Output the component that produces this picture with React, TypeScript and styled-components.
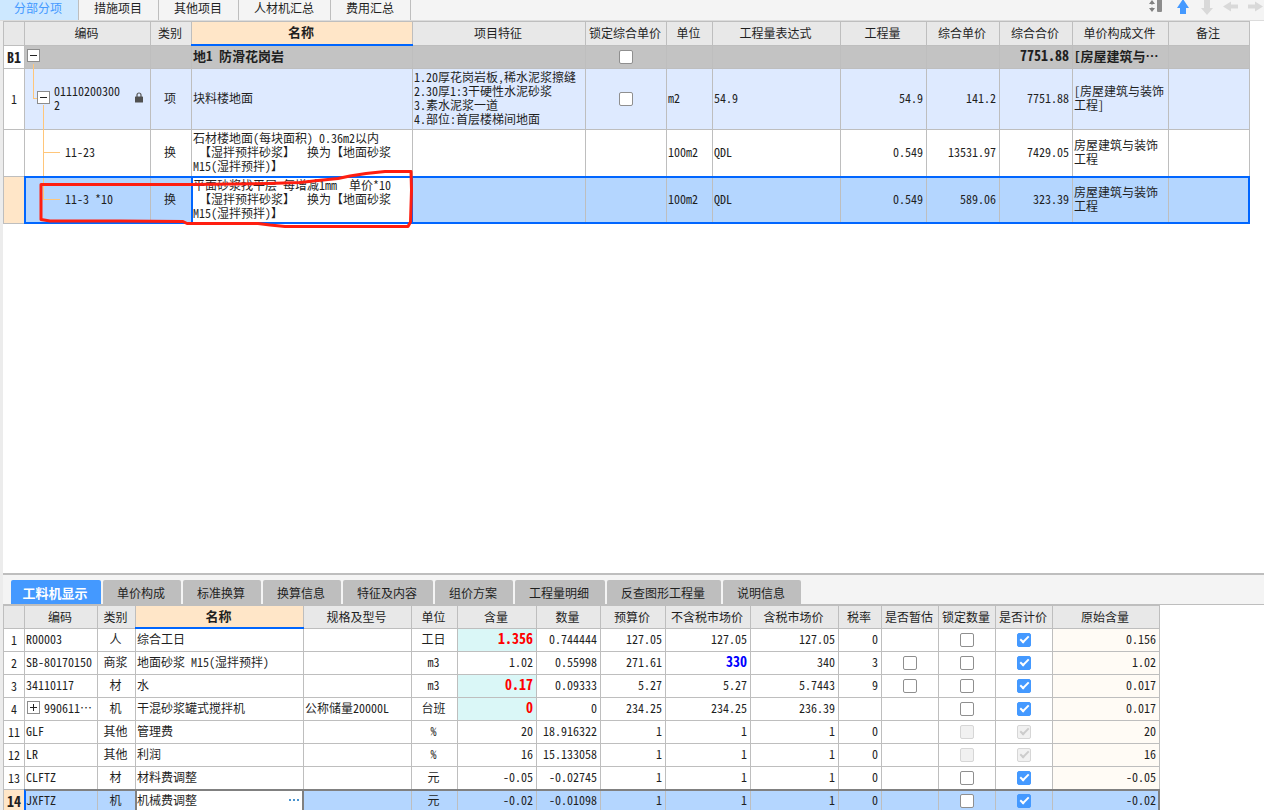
import React from 'react';
import styled, { createGlobalStyle, css } from 'styled-components';

const LINE = '#bebebe';
const BLUE = '#0066ff';
const SONG = '"Noto Sans Mono CJK SC", "Noto Sans CJK SC", monospace';

const GlobalStyle = createGlobalStyle`
  *, *::before, *::after { box-sizing: border-box; }
  body { margin: 0; background: #ffffff; color: #1f1f1f; font: 12px/14px ${SONG}; }
  button { font: inherit; color: inherit; border: 0; margin: 0; padding: 0; background: none; cursor: pointer; }
`;

const Page = styled.main`
  display: flex;
  flex-direction: column;
  height: 100vh;
  overflow: hidden;
`;

const TopBar = styled.header`
  display: flex;
  justify-content: space-between;
  flex: none;
  height: 21px;
  background: #f4f4f4;
  border-bottom: 1px solid #dcdcdc;
`;

const TabRow = styled.nav`
  display: flex;
`;

const TopTab = styled.button<{ $active?: boolean }>`
  height: 20px;
  padding: 0 16px 4px 15px;
  border-right: 1px solid ${LINE};
  ${p => p.$active && css`
    background: #cde8ff;
    color: #4499ff;
    padding-left: 14px;
  `}
`;

const Tools = styled.div`
  display: flex;
  align-items: flex-start;
  gap: 8px;
  padding-right: 1px;
  svg { display: block; }
`;

const ToolButton = styled.button<{ $apart?: boolean }>`
  display: block;
  width: 16px;
  height: 16px;
  margin-right: ${p => (p.$apart ? 4 : 0)}px;
`;

const Body = styled.div`
  display: flex;
  flex-direction: column;
  flex: 1;
  min-height: 0;
  border-left: 3px solid #ececec;
`;

const UpperPane = styled.section`
  position: relative;
  flex: 1;
  min-height: 0;
  padding-right: 14px;
  overflow: hidden;
`;

const LowerPane = styled.section`
  flex: none;
  height: 237px;
  overflow: hidden;
  border-top: 2px solid ${LINE};
`;

const LowerTabs = styled.nav`
  display: flex;
  gap: 2px;
  height: 30px;
  padding: 5px 0 0 8px;
  background: #f4f4f4;
  border-bottom: 1px solid ${LINE};
`;

const LowerTab = styled.button<{ $active?: boolean }>`
  height: 24px;
  padding: 2px 16px 0 14px;
  border-radius: 2px 2px 0 0;
  background: ${LINE};
  ${p => p.$active && css`
    min-width: 90px;
    padding: 2px 13px 0 11px;
    background: #4499ff;
    color: #ffffff;
    font-size: 13px;
    font-weight: 700;
  `}
`;

const LowerGridArea = styled.div`
  padding-right: 104px;
`;

const Grid = styled.table`
  width: 100%;
  table-layout: fixed;
  border-collapse: separate;
  border-spacing: 0;
  border-top: 1px solid ${LINE};
  border-left: 1px solid ${LINE};
`;

const HeadRow = styled.tr<{ $h: number }>`
  height: ${p => p.$h}px;
`;

const Th = styled.th<{ $active?: boolean }>`
  padding: 0 2px 1px 0;
  border-right: 1px solid ${LINE};
  border-bottom: 1px solid ${LINE};
  background: #e8e8e8;
  font-weight: 400;
  white-space: nowrap;
  ${p => p.$active && css`
    position: relative;
    padding-bottom: 3px;
    background: #ffe6c8;
    font-size: 13px;
    font-weight: 700;
    &::after {
      content: '';
      position: absolute;
      left: -1px;
      right: -1px;
      bottom: -1px;
      height: 2px;
      background: ${BLUE};
    }
  `}
`;

const Num = styled.th<{ $on?: boolean; $bold?: boolean }>`
  padding: 0;
  border-right: 1px solid ${LINE};
  border-bottom: 1px solid ${LINE};
  background: ${p => (p.$on ? '#ffe6c8' : '#ffffff')};
  font-size: ${p => (p.$bold ? 14 : 12)}px;
  font-weight: ${p => (p.$bold ? 700 : 400)};
`;

const Td = styled.td<{ $align?: 'left' | 'center' | 'right'; $bg?: string; $pad?: number }>`
  position: relative;
  padding: 0 3px 3px ${p => p.$pad ?? 1}px;
  border-right: 1px solid ${LINE};
  border-bottom: 1px solid ${LINE};
  text-align: ${p => p.$align ?? 'left'};
  vertical-align: middle;
  white-space: pre-wrap;
  ${p => p.$bg && css`background: ${p.$bg};`}
`;

const BoxCell = styled(Td)`
  padding: 0;
`;

const ActiveCell = styled(Td)<{ $edge: string }>`
  background: #ffffff;
  &::before {
    content: '';
    position: absolute;
    inset: -1px;
    border: 2px solid ${p => p.$edge};
    pointer-events: none;
  }
`;

type Tone = 'plain' | 'section' | 'item' | 'selected' | 'current';
const tones: Record<Tone, string> = {
  plain: '#ffffff',
  section: '#c3c3c3',
  item: '#deeaff',
  selected: '#b4d6ff',
  current: '#b4d6ff',
};

const Row = styled.tr<{ $h: number; $tone: Tone }>`
  height: ${p => p.$h}px;
  background: ${p => tones[p.$tone]};
  ${p => p.$tone === 'section' && css`font-size: 13px; font-weight: 700;`}
  ${p => (p.$tone === 'selected' || p.$tone === 'current') && css`
    td::after {
      content: '';
      position: absolute;
      inset: -1px;
      border: 0 solid ${p.$tone === 'selected' ? BLUE : '#808080'};
      border-width: 2px 0;
      pointer-events: none;
    }
    td:nth-child(2)::after { border-left: 2px solid ${BLUE}; }
    td:last-child::after { border-right-width: 2px; }
  `}
`;

const OneLine = styled.span`
  white-space: nowrap;
`;

const Inline = styled.div`
  display: flex;
  align-items: center;
  gap: 4px;
`;

const Between = styled(Inline)`
  justify-content: space-between;
`;

const CodeBlock = styled(Between)`
  padding-right: 4px;
`;

const Value = styled.strong<{ $color?: string }>`
  color: ${p => p.$color ?? 'inherit'};
  font-size: 14px;
`;

const Expander = styled.button`
  position: relative;
  z-index: 1;
  display: block;
  flex: none;
  width: 13px;
  height: 13px;
  border: 1px solid #8c8c8c;
  background: #ffffff;
  svg { display: block; }
`;

const Code = styled.span`
  flex: none;
  width: 70px;
  margin-right: auto;
  word-break: break-all;
`;

const Branch = styled.svg`
  position: absolute;
  top: 0;
  left: 0;
  width: 40px;
  height: 100%;
  overflow: visible;
`;

const Check = styled.input`
  appearance: none;
  display: block;
  width: 14px;
  height: 14px;
  margin: 0 auto;
  border: 1px solid #8f8f8f;
  border-radius: 2px;
  background: #ffffff;
  &:checked {
    border-color: #4499ff;
    background: #4499ff;
  }
  &:disabled {
    border-color: #d6d6d6;
    background: #f1f1f1;
  }
  &:checked::after {
    content: '';
    display: block;
    width: 9px;
    height: 5px;
    margin: 2px 0 0 2px;
    border: solid #ffffff;
    border-width: 0 0 2px 2px;
    transform: rotate(-45deg);
  }
  &:checked:disabled::after { border-color: #cccccc; }
`;

const More = styled.button`
  display: flex;
  gap: 2px;
  padding-right: 1px;
  i { width: 2px; height: 2px; background: #4a94cf; }
`;

const Mark = styled.svg`
  position: absolute;
  left: 33px;
  top: 145px;
  pointer-events: none;
`;

function Fold({ open }: { open: boolean }) {
  return (
    <Expander aria-label={open ? '折叠' : '展开'}>
      <svg width="11" height="11" viewBox="0 0 11 11" shapeRendering="crispEdges" stroke="#222" fill="none">
        <path d={open ? 'M2 5.5H9' : 'M2 5.5H9M5.5 2V9'} />
      </svg>
    </Expander>
  );
}

const Lock = () => (
  <svg width="8" height="11" viewBox="0 0 8 11" aria-hidden="true">
    <path d="M2 5V3a2 2 0 0 1 4 0v2" fill="none" stroke="#555" strokeWidth="1.2" />
    <rect x="0" y="4.5" width="8" height="6" rx="0.6" fill="#505050" />
  </svg>
);

const Cols = ({ widths }: { widths: number[] }) => (
  <colgroup>
    {widths.map((w, i) => <col key={i} style={i < widths.length - 1 ? { width: w } : undefined} />)}
  </colgroup>
);

const upperCols = [21, 126, 41, 221, 173, 81, 46, 128, 86, 73, 73, 96, 81];
const upperHeads = ['', '编码', '类别', '名称', '项目特征', '锁定综合单价', '单位', '工程量表达式', '工程量', '综合单价', '综合合价', '单价构成文件', '备注'];
const lowerCols = [21, 73, 38, 168, 108, 46, 79, 64, 65, 85, 88, 43, 57, 57, 57, 107];
const lowerHeads = ['', '编码', '类别', '名称', '规格及型号', '单位', '含量', '数量', '预算价', '不含税市场价', '含税市场价', '税率', '是否暂估', '锁定数量', '是否计价', '原始含量'];

type Box = 'none' | 'off' | 'on' | 'off-disabled' | 'on-disabled';
type Resource = {
  no: string; code: string; kind: string; name: string; spec?: string; unit: string;
  amount: string; hot?: boolean; qty: string; budget: string; net: string; edited?: boolean;
  gross: string; tax: string; boxes: [Box, Box, Box]; origin: string;
};

const resources: Resource[] = [
  { no: '1', code: 'R00003', kind: '人', name: '综合工日', unit: '工日', amount: '1.356', hot: true, qty: '0.744444', budget: '127.05', net: '127.05', gross: '127.05', tax: '0', boxes: ['none', 'off', 'on'], origin: '0.156' },
  { no: '2', code: 'SB-80170150', kind: '商浆', name: '地面砂浆 M15(湿拌预拌)', unit: 'm3', amount: '1.02', qty: '0.55998', budget: '271.61', net: '330', edited: true, gross: '340', tax: '3', boxes: ['off', 'off', 'on'], origin: '1.02' },
  { no: '3', code: '34110117', kind: '材', name: '水', unit: 'm3', amount: '0.17', hot: true, qty: '0.09333', budget: '5.27', net: '5.27', gross: '5.7443', tax: '9', boxes: ['off', 'off', 'on'], origin: '0.017' },
  { no: '4', code: '990611⋯', kind: '机', name: '干混砂浆罐式搅拌机', spec: '公称储量20000L', unit: '台班', amount: '0', hot: true, qty: '0', budget: '234.25', net: '234.25', gross: '236.39', tax: '', boxes: ['none', 'off', 'on'], origin: '0.017' },
  { no: '11', code: 'GLF', kind: '其他', name: '管理费', unit: '%', amount: '20', qty: '18.916322', budget: '1', net: '1', gross: '1', tax: '0', boxes: ['none', 'off-disabled', 'on-disabled'], origin: '20' },
  { no: '12', code: 'LR', kind: '其他', name: '利润', unit: '%', amount: '16', qty: '15.133058', budget: '1', net: '1', gross: '1', tax: '0', boxes: ['none', 'off-disabled', 'on-disabled'], origin: '16' },
  { no: '13', code: 'CLFTZ', kind: '材', name: '材料费调整', unit: '元', amount: '-0.05', qty: '-0.02745', budget: '1', net: '1', gross: '1', tax: '0', boxes: ['none', 'off', 'on'], origin: '-0.05' },
  { no: '14', code: 'JXFTZ', kind: '机', name: '机械费调整', unit: '元', amount: '-0.02', qty: '-0.01098', budget: '1', net: '1', gross: '1', tax: '0', boxes: ['none', 'off', 'on'], origin: '-0.02' },
];

function Tick({ state, label }: { state: Box; label: string }) {
  if (state === 'none') return null;
  return <Check type="checkbox" aria-label={label} defaultChecked={state.startsWith('on')} disabled={state.endsWith('disabled')} />;
}

function Head({ labels, height }: { labels: string[]; height: number }) {
  return (
    <thead>
      <HeadRow $h={height}>
        {labels.map((l, i) => <Th key={i} scope="col" $active={l === '名称'}>{l}</Th>)}
      </HeadRow>
    </thead>
  );
}

function ResourceRow({ r }: { r: Resource }) {
  const current = r.no === '14';
  const boxNames = lowerHeads.slice(12, 15);
  return (
    <Row $h={23} $tone={current ? 'current' : 'plain'}>
      <Num scope="row" $on={current} $bold={current}>{r.no}</Num>
      {r.no === '4'
        ? <Td $pad={2}><Inline><Fold open={false} /><OneLine>{r.code}</OneLine></Inline></Td>
        : <Td><OneLine>{r.code}</OneLine></Td>}
      <Td $align="center">{r.kind}</Td>
      {current ? (
        <ActiveCell $edge="#808080">
          <Between>{r.name}<More aria-label="更多"><i /><i /><i /></More></Between>
        </ActiveCell>
      ) : <Td>{r.name}</Td>}
      <Td>{r.spec}</Td>
      <Td $align="center">{r.unit}</Td>
      <Td $align="right" $bg={r.hot ? '#daf7f7' : undefined}>{r.hot ? <Value $color="#ff0000">{r.amount}</Value> : r.amount}</Td>
      <Td $align="right">{r.qty}</Td>
      <Td $align="right">{r.budget}</Td>
      <Td $align="right">{r.edited ? <Value $color="#0000ff">{r.net}</Value> : r.net}</Td>
      <Td $align="right">{r.gross}</Td>
      <Td $align="right">{r.tax}</Td>
      {r.boxes.map((b, i) => <BoxCell key={i}><Tick state={b} label={`${boxNames[i]} ${r.name}`} /></BoxCell>)}
      <Td $align="right" $bg={current ? undefined : '#fffbf5'}>{r.origin}</Td>
    </Row>
  );
}

export default function App() {
  return (
    <Page>
      <GlobalStyle />
      <TopBar>
        <TabRow>
          {['分部分项', '措施项目', '其他项目', '人材机汇总', '费用汇总'].map((t, i) => <TopTab key={t} $active={i === 0}>{t}</TopTab>)}
        </TabRow>
        <Tools>
          <ToolButton $apart aria-label="行高">
            <svg width="16" height="16" viewBox="0 0 16 16"><path d="M2 4l3-4 3 4zM2 8l3 4 3-4z" fill="#808080" /><path d="M5 4v1M5 7v1" stroke="#999" /><rect x="10" y="-1" width="5" height="13" rx="1" fill="#8c8c8c" /></svg>
          </ToolButton>
          <ToolButton aria-label="上移">
            <svg width="16" height="16" viewBox="0 0 16 16"><path d="M8 -1l6 9h-3v6H5V8H2z" fill="#4499ff" /></svg>
          </ToolButton>
          <ToolButton aria-label="下移">
            <svg width="16" height="16" viewBox="0 0 16 16"><path d="M5 0h6v8h3l-6 7-6-7h3z" fill="#d9d9d9" /></svg>
          </ToolButton>
          <ToolButton aria-label="左移">
            <svg width="16" height="16" viewBox="0 0 16 16"><path d="M0 6.500L8 1.500v3h7v4H8v3z" fill="#d9d9d9" /></svg>
          </ToolButton>
          <ToolButton aria-label="右移">
            <svg width="16" height="16" viewBox="0 0 16 16"><path d="M16 6.500L8 1.500v3H1v4h7v3z" fill="#d9d9d9" /></svg>
          </ToolButton>
        </Tools>
      </TopBar>

      <Body>
        <UpperPane>
          <Grid>
            <Cols widths={upperCols} />
            <Head labels={upperHeads} height={24} />
            <tbody>
              <Row $h={23} $tone="section">
                <Num scope="row" $bold>B1</Num>
                <Td $pad={2}>
                  <Fold open />
                </Td>
                <Td />
                <Td>地1 防滑花岗岩</Td>
                <Td />
                <BoxCell><Tick state="off" label="锁定综合单价 地1" /></BoxCell>
                <Td /><Td /><Td /><Td />
                <Td $align="right"><Value>7751.88</Value></Td>
                <Td><OneLine>[房屋建筑与⋯</OneLine></Td>
                <Td />
              </Row>
              <Row $h={61} $tone="item">
                <Num scope="row">1</Num>
                <Td $pad={12}>
                  <Branch stroke="#ffc67a" fill="none" shapeRendering="crispEdges"><path d="M8.500 -5V29.500H13M18.500 36V61" /></Branch>
                  <CodeBlock><Fold open /><Code>011102003002</Code><Lock /></CodeBlock>
                </Td>
                <Td $align="center">项</Td>
                <Td>块料楼地面</Td>
                <Td>{'1.20厚花岗岩板,稀水泥浆擦缝\n2.30厚1:3干硬性水泥砂浆\n3.素水泥浆一道\n4.部位:首层楼梯间地面'}</Td>
                <BoxCell><Tick state="off" label="锁定综合单价 块料楼地面" /></BoxCell>
                <Td>m2</Td>
                <Td>54.9</Td>
                <Td $align="right">54.9</Td>
                <Td $align="right">141.2</Td>
                <Td $align="right">7751.88</Td>
                <Td>[房屋建筑与装饰工程]</Td>
                <Td />
              </Row>
              <Row $h={47} $tone="plain">
                <Num scope="row" />
                <Td $pad={40}>
                  <Branch stroke="#ffc67a" fill="none" shapeRendering="crispEdges"><path d="M18.500 0V47M18.500 22.500H35" /></Branch>
                  11-23
                </Td>
                <Td $align="center">换</Td>
                <Td>{'石材楼地面(每块面积) 0.36m2以内\n 【湿拌预拌砂浆】  换为【地面砂浆\nM15(湿拌预拌)】'}</Td>
                <Td /><Td />
                <Td>100m2</Td>
                <Td>QDL</Td>
                <Td $align="right">0.549</Td>
                <Td $align="right">13531.97</Td>
                <Td $align="right">7429.05</Td>
                <Td>房屋建筑与装饰工程</Td>
                <Td />
              </Row>
              <Row $h={47} $tone="selected">
                <Num scope="row" $on />
                <Td $pad={40}>
                  <Branch stroke="#ffc67a" fill="none" shapeRendering="crispEdges"><path d="M18.500 0V22.500H35" /></Branch>
                  11-3 *10
                </Td>
                <Td $align="center">换</Td>
                <ActiveCell $edge={BLUE}>{'平面砂浆找平层 每增减1mm  单价*10\n 【湿拌预拌砂浆】  换为【地面砂浆\nM15(湿拌预拌)】'}</ActiveCell>
                <Td /><Td />
                <Td>100m2</Td>
                <Td>QDL</Td>
                <Td $align="right">0.549</Td>
                <Td $align="right">589.06</Td>
                <Td $align="right">323.39</Td>
                <Td>房屋建筑与装饰工程</Td>
                <Td />
              </Row>
            </tbody>
          </Grid>
          <Mark width="384" height="66" viewBox="36 166 384 66" fill="none" stroke="#ff1e10" strokeWidth="3" strokeLinejoin="round" strokeLinecap="round">
            <path d="M41 184.500H190L268 183.500L300 182.500L318 180.500L338 178.500L350 176L366 173.500L385 171.500H411L411.500 190L410.500 222L408 226.500H285L270 225L258 223.500H187L183 221.500L120 221H50L41 219.500Z" />
          </Mark>
        </UpperPane>

        <LowerPane>
          <LowerTabs>
            {['工料机显示', '单价构成', '标准换算', '换算信息', '特征及内容', '组价方案', '工程量明细', '反查图形工程量', '说明信息'].map((t, i) => <LowerTab key={t} $active={i === 0}>{t}</LowerTab>)}
          </LowerTabs>
          <LowerGridArea>
            <Grid>
              <Cols widths={lowerCols} />
              <Head labels={lowerHeads} height={23} />
              <tbody>
                {resources.map(r => <ResourceRow key={r.no} r={r} />)}
              </tbody>
            </Grid>
          </LowerGridArea>
        </LowerPane>
      </Body>
    </Page>
  );
}
